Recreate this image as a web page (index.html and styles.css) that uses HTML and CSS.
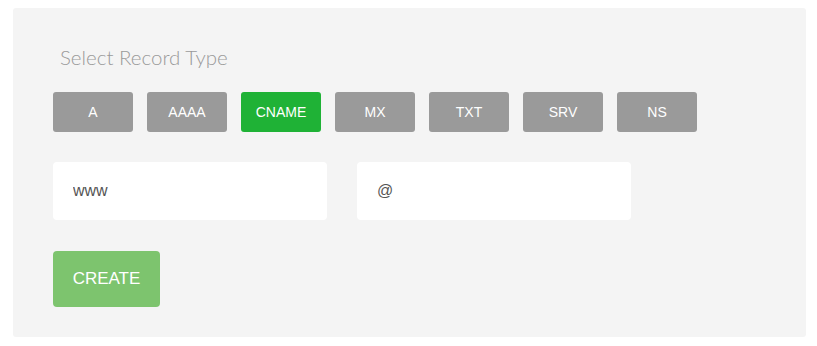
FILE: index.html
```html
<!DOCTYPE html>
<html lang="en">

<head>
    <meta charset="UTF-8">
    <meta name="viewport" content="width=device-width, initial-scale=1.0">
    <title>Create Record</title>
    <link rel="stylesheet" href="styles.css">
</head>

<body>
    <div class="panel">
        <h3 class="panel-title">Select Record Type</h3>

        <!-- Record type picker -->
        <div class="types">
            <button class="type-btn">A</button>
            <button class="type-btn">AAAA</button>
            <button class="type-btn active">CNAME</button>
            <button class="type-btn">MX</button>
            <button class="type-btn">TXT</button>
            <button class="type-btn">SRV</button>
            <button class="type-btn">NS</button>
        </div>

        <div class="fields">
            <input class="field" type="text" value="www">
            <input class="field" type="text" value="@">
        </div>

        <button class="create-btn">CREATE</button>
    </div>
</body>

</html>
```

FILE: styles.css
```css
* {
    margin: 0;
    padding: 0;
    box-sizing: border-box;
}

body {
    margin: 8px;
    background-color: #ffffff;
    font-family: 'Liberation Sans', Arial, sans-serif;
}

.panel {
    width: 793px;
    height: 329px;
    margin-left: 5px;
    background-color: #f4f4f4;
    border-radius: 3px;
    padding: 35px 40px 30px;
}

.panel-title {
    font-family: 'Lato', sans-serif;
    font-weight: 300;
    font-size: 20.5px;
    line-height: 28px;
    color: #9a9a9a;
    margin-left: 7px;
    margin-bottom: 21px;
}

.types {
    display: flex;
    gap: 14px;
}

.type-btn {
    width: 80px;
    height: 40px;
    border: none;
    border-radius: 3px;
    background-color: #9a9a9a;
    color: #ffffff;
    font-family: 'Liberation Sans', Arial, sans-serif;
    font-size: 14px;
    cursor: pointer;
}

.type-btn.active {
    background-color: #1fb236;
}

.fields {
    display: flex;
    gap: 30px;
    margin-top: 30px;
}

.field {
    width: 274px;
    height: 58px;
    border: none;
    border-radius: 4px;
    background-color: #ffffff;
    padding: 0 20px;
    font-family: 'Liberation Sans', Arial, sans-serif;
    font-size: 16px;
    color: #555555;
    outline: none;
}

.create-btn {
    display: block;
    margin-top: 31px;
    width: 107px;
    height: 56px;
    border: none;
    border-radius: 4px;
    background-color: #7dc46e;
    color: #ffffff;
    font-family: 'Liberation Sans', Arial, sans-serif;
    font-size: 17px;
    cursor: pointer;
}
```
